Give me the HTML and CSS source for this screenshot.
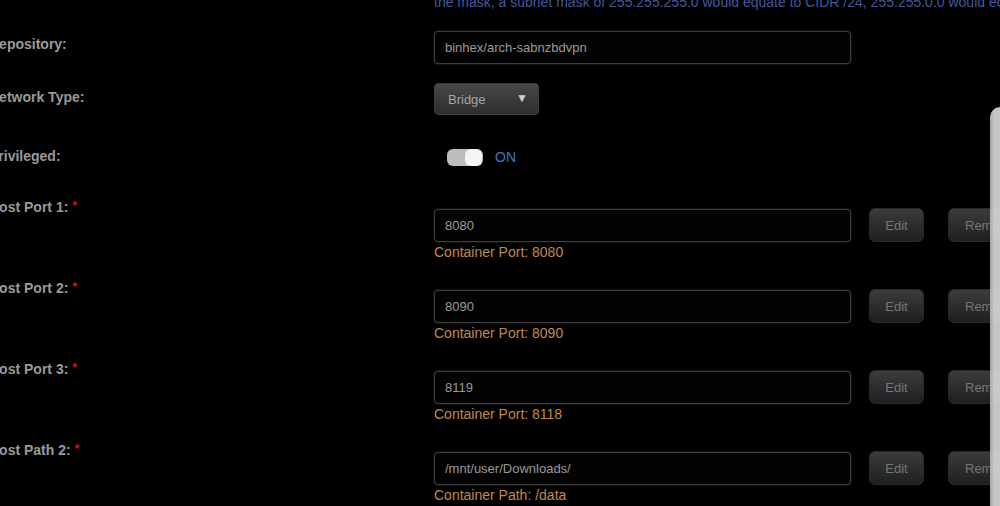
FILE: index.html
```html
<!DOCTYPE html>
<html lang="en">
<head>
    <meta charset="UTF-8">
    <meta name="viewport" content="width=device-width, initial-scale=1.0">
    <title>Update Container</title>
    <link rel="stylesheet" href="styles.css">
</head>
<body>
    <div class="form">
        <div class="row row-help">
            <div class="label"></div>
            <p class="help">the mask, a subnet mask of 255.255.255.0 would equate to CIDR /24, 255.255.0.0 would equate to CIDR /16, and so on.</p>
        </div>

        <div class="row row-repo">
            <div class="label">Repository:</div>
            <div class="field">
                <input class="text" type="text" value="binhex/arch-sabnzbdvpn" readonly>
            </div>
        </div>

        <div class="row row-network">
            <div class="label">Network Type:</div>
            <div class="field">
                <div class="select">
                    <span>Bridge</span>
                    <span class="arrow">&#9660;</span>
                </div>
            </div>
        </div>

        <div class="row row-privileged">
            <div class="label">Privileged:</div>
            <div class="field toggle-field">
                <span class="switch"></span>
                <span class="switch-text">ON</span>
            </div>
        </div>

        <div class="row row-config">
            <div class="label">Host Port 1: <span class="req">*</span></div>
            <div class="field config">
                <div class="config-line">
                    <input class="text" type="text" value="8080" readonly>
                    <button class="btn">Edit</button>
                    <button class="btn btn-remove">Remove</button>
                </div>
                <div class="note">Container Port: 8080</div>
            </div>
        </div>

        <div class="row row-config">
            <div class="label">Host Port 2: <span class="req">*</span></div>
            <div class="field config">
                <div class="config-line">
                    <input class="text" type="text" value="8090" readonly>
                    <button class="btn">Edit</button>
                    <button class="btn btn-remove">Remove</button>
                </div>
                <div class="note">Container Port: 8090</div>
            </div>
        </div>

        <div class="row row-config">
            <div class="label">Host Port 3: <span class="req">*</span></div>
            <div class="field config">
                <div class="config-line">
                    <input class="text" type="text" value="8119" readonly>
                    <button class="btn">Edit</button>
                    <button class="btn btn-remove">Remove</button>
                </div>
                <div class="note">Container Port: 8118</div>
            </div>
        </div>

        <div class="row row-config">
            <div class="label">Host Path 2: <span class="req">*</span></div>
            <div class="field config">
                <div class="config-line">
                    <input class="text" type="text" value="/mnt/user/Downloads/" readonly>
                    <button class="btn">Edit</button>
                    <button class="btn btn-remove">Remove</button>
                </div>
                <div class="note">Container Path: /data</div>
            </div>
        </div>
    </div>

    <div class="drawer"></div>
</body>
</html>
```

FILE: styles.css
```css
html, body {
    margin: 0;
    padding: 0;
    background-color: #000;
    overflow: hidden;
    height: 506px;
}
body {
    font-family: "Liberation Sans", Arial, sans-serif;
    font-size: 14px;
    color: #999;
}
.form {
    margin-left: -11px;
    width: 1100px;
}
.row {
    display: grid;
    grid-template-columns: 445px 1fr;
}
.label {
    font-weight: bold;
    color: #9a9a9a;
    line-height: 17px;
    white-space: nowrap;
}
.req {
    color: #c41818;
    font-size: 13px;
    position: relative;
    top: -2px;
}
.help {
    margin: 0;
    line-height: 17px;
    color: #44579c;
    white-space: nowrap;
}
.row-help {
    margin-top: -6px;
}
.row-repo {
    margin-top: 20px;
}
.row-repo .label {
    padding-top: 5px;
}
.row-network {
    margin-top: 19px;
}
.row-network .label {
    padding-top: 6px;
}
.row-privileged {
    margin-top: 32px;
}
.row-privileged .label {
    padding-top: 1px;
}
.row-config {
    margin-top: 17px;
}
.row-config .label {
    padding-top: 2px;
}
.row-privileged + .row-config {
    margin-top: 30px;
}
.text {
    box-sizing: border-box;
    width: 417px;
    height: 33px;
    margin: 0;
    padding: 0 10px;
    font-family: "Liberation Sans", Arial, sans-serif;
    font-size: 13px;
    color: #9a9a9a;
    background-color: #030303;
    border: 1px solid #3e3e3e;
    border-radius: 4px;
    box-shadow: inset 0 1px 4px rgba(0,0,0,0.9), 0 0 2px rgba(90,90,90,0.6);
    outline: none;
}
.select {
    box-sizing: border-box;
    width: 105px;
    height: 32px;
    padding: 0 10px 0 13px;
    display: flex;
    align-items: center;
    justify-content: space-between;
    font-size: 13px;
    color: #a5a5a5;
    background: linear-gradient(#474747, #2e2e2e);
    border: 1px solid #3c3c3c;
    border-radius: 4px;
}
.arrow {
    font-size: 12px;
    color: #d0d0d0;
    margin-top: -2px;
}
.toggle-field {
    display: flex;
    align-items: center;
    gap: 12px;
    height: 20px;
    padding-left: 13px;
}
.switch {
    position: relative;
    width: 36px;
    height: 17px;
    border-radius: 6px;
    background-color: #bdbdbd;
}
.switch::after {
    content: "";
    position: absolute;
    right: 1px;
    top: 0;
    width: 17px;
    height: 17px;
    border-radius: 6px;
    background-color: #f4f4f4;
}
.switch-text {
    color: #3a7cc0;
    font-size: 14px;
}
.config {
    padding-top: 11px;
}
.config-line {
    display: flex;
    align-items: center;
}
.btn {
    box-sizing: border-box;
    height: 34px;
    width: 55px;
    margin-left: 18px;
    padding: 0;
    font-family: "Liberation Sans", Arial, sans-serif;
    font-size: 13px;
    color: #767676;
    background: linear-gradient(#3c3c3c, #1f1f1f);
    border: 1px solid #2a2a2a;
    border-radius: 6px;
}
.btn-remove {
    width: 78px;
    margin-left: 24px;
    text-align: left;
    padding-left: 16px;
}
.note {
    margin-top: 2px;
    line-height: 17px;
    color: #c0894c;
}
.drawer {
    position: fixed;
    left: 990px;
    top: 107px;
    right: 0;
    bottom: 0;
    border-top-left-radius: 12px;
    background: linear-gradient(to right, rgba(175,175,175,0.95), rgba(212,212,212,0.93) 4px);
}
```
